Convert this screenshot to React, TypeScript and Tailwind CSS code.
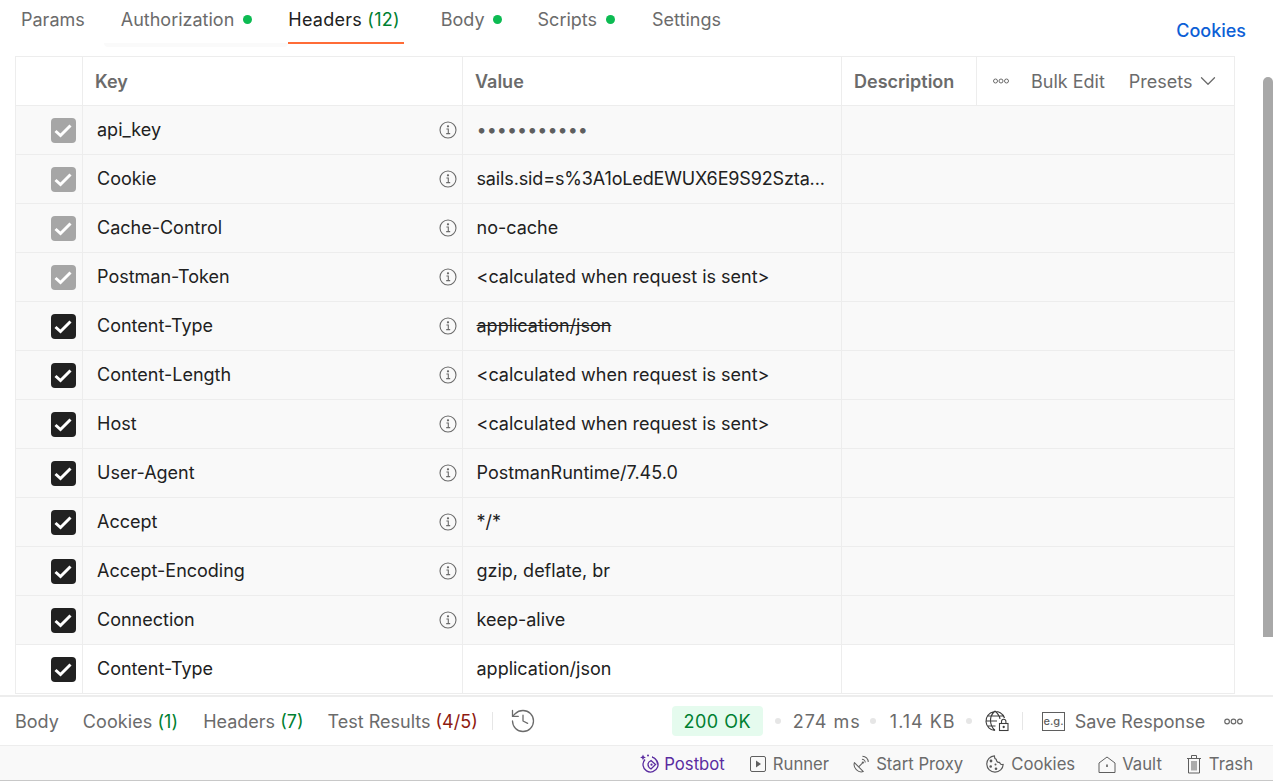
import { ChevronDown, History } from "lucide-react";

type Row = {
  name: string;
  value: string;
  auto?: boolean;
  info?: boolean;
  struck?: boolean;
  white?: boolean;
  valueClass?: string;
};

const rows: Row[] = [
  { name: "api_key", value: "•••••••••••", auto: true, info: true, valueClass: "text-[#5f5f5f]" },
  { name: "Cookie", value: "sails.sid=s%3A1oLedEWUX6E9S92Szta...", auto: true, info: true, valueClass: "tracking-[-0.14px]" },
  { name: "Cache-Control", value: "no-cache", auto: true, info: true },
  { name: "Postman-Token", value: "<calculated when request is sent>", auto: true, info: true },
  { name: "Content-Type", value: "application/json", info: true, struck: true },
  { name: "Content-Length", value: "<calculated when request is sent>", info: true },
  { name: "Host", value: "<calculated when request is sent>", info: true },
  { name: "User-Agent", value: "PostmanRuntime/7.45.0", info: true },
  { name: "Accept", value: "*/*", info: true },
  { name: "Accept-Encoding", value: "gzip, deflate, br", info: true },
  { name: "Connection", value: "keep-alive", info: true },
  { name: "Content-Type", value: "application/json", white: true },
];

const GreenDot = ({ className }: { className: string }) => (
  <span className={`block h-[9px] w-[9px] shrink-0 rounded-full bg-[#0cbb52] ${className}`} />
);
const Sep = ({ className }: { className: string }) => (
  <span className={`block h-[6px] w-[6px] shrink-0 rounded-full bg-[#e6e6e6] ${className}`} />
);

const Dots = ({ width = 16, height = 6 }: { width?: number; height?: number }) => (
  <svg width={width} height={height} viewBox="0 0 16 6" fill="none" stroke="#6b6b6b" strokeWidth="1">
    <circle cx="2.500" cy="3" r="2" />
    <circle cx="8" cy="3" r="2" />
    <circle cx="13.500" cy="3" r="2" />
  </svg>
);

const Info = () => (
  <svg width="18" height="18" viewBox="0 0 18 18" fill="none" stroke="#6b6b6b" strokeWidth="1.1">
    <circle cx="9" cy="9" r="8" />
    <path d="M7.400 8h1.900v4.400M7.200 12.600h4" />
    <circle cx="9" cy="5.300" r="0.600" fill="#6b6b6b" />
  </svg>
);

const Check = ({ auto }: { auto?: boolean }) => (
  <span
    className={`flex h-[25px] w-[25px] items-center justify-center rounded-[4px] ${
      auto ? "bg-[#a6a6a6]" : "bg-[#212121]"
    }`}
  >
    <svg width="18" height="15" viewBox="0 0 18 15" fill="none" stroke="#fff" strokeWidth="3">
      <path d="M1.500 8l5 4.500L16.500 2.500" />
    </svg>
  </span>
);

const GlobeLock = () => (
  <svg width="25" height="22" viewBox="0 0 25 22" fill="none" stroke="#3d3d3d" strokeWidth="1.100">
    <path d="M19.500 8A9.500 9.500 0 1 0 10 20.500M1 11h11M2 6h17M2.500 16h8M10 1c-6 5-6 14 0 19.500M10 1c3 2.500 4.500 5 5 8" />
    <rect x="14.500" y="13.500" width="8.500" height="7" fill="#fff" />
    <path d="M16.500 13.500v-2a2.200 2.200 0 0 1 4.400 0v2" />
    <circle cx="18.700" cy="17" r="0.600" />
  </svg>
);

const SaveIcon = () => (
  <svg width="23" height="19" viewBox="0 0 23 19" fill="none">
    <rect x="0.500" y="0.500" width="22" height="18" stroke="#5f5f5f" />
    <text x="11.500" y="13" textAnchor="middle" fontSize="11" fontWeight="500" fontFamily="Inter, sans-serif" fill="#5f5f5f">
      e.g.
    </text>
  </svg>
);

const PostbotIcon = () => (
  <svg width="19" height="20" viewBox="0 0 19 20" fill="none" stroke="#5a2ca0" strokeWidth="1.300">
    <path d="M5 5.500a7.500 7.500 0 1 0 7-2.300c2.800.5 5.500 3.300 5.500 7.300" />
    <path d="M11 6.500l4.500 4-4.500 4.500c-1.800-1-3-2.800-3-4.500s1.200-3.200 3-4z" />
    <circle cx="11.500" cy="10.700" r="1.100" fill="#5a2ca0" stroke="none" />
    <path d="M3 0.500l.9 2 2 .9-2 .9-.9 2-.9-2-2-.9 2-.9z" fill="#5a2ca0" stroke="none" />
    <circle cx="8" cy="1.500" r="1" fill="#5a2ca0" stroke="none" />
  </svg>
);

const RunnerIcon = () => (
  <svg width="16" height="16" viewBox="0 0 16 16" fill="none" stroke="#5f5f5f">
    <rect x="0.500" y="0.500" width="15" height="15" rx="1.500" />
    <path d="M6 4.500l5 3.500-5 3.500z" fill="#5f5f5f" stroke="none" />
  </svg>
);

const ProxyIcon = () => (
  <svg width="17" height="18" viewBox="0 0 17 18" fill="none" stroke="#5f5f5f" strokeWidth="1.100">
    <path d="M1.500 7.500c-1 3 0 5.500 2 7.500s5 3 7.500 2z" strokeLinejoin="round" />
    <path d="M6 12l4-4" />
    <circle cx="10.500" cy="7.500" r="1.200" fill="#5f5f5f" stroke="none" />
    <path d="M9.500 4c1.700 0 3.500 1.500 3.500 3.500M10 0.800c3.500 0 6.200 2.700 6.200 6.200" />
  </svg>
);

const CookieIcon = () => (
  <svg width="18" height="18" viewBox="0 0 18 18" fill="none" stroke="#5a5a5a" strokeWidth="1.200">
    <path d="M8.500 0.800a8.200 8.200 0 1 0 8.700 8.500c-1.800.6-3.200-.2-3.600-1.900-1.800.2-3.300-1-3.300-3-1.300-.3-2-1.800-1.800-3.600z" strokeLinejoin="round" />
    <circle cx="5" cy="6" r="1.400" fill="#5a5a5a" stroke="none" />
    <circle cx="4.700" cy="11.500" r="1.300" fill="#5a5a5a" stroke="none" />
    <circle cx="9.500" cy="9.500" r="1" fill="#5a5a5a" stroke="none" />
    <circle cx="10" cy="13.800" r="1.300" fill="#5a5a5a" stroke="none" />
  </svg>
);

const VaultIcon = () => (
  <svg width="18" height="17" viewBox="0 0 18 17" fill="none" stroke="#5f5f5f">
    <path d="M1 7L9 1l8 6v9.500H1z" strokeLinejoin="round" />
    <path d="M9 8.500v2.500" strokeWidth="1.600" />
  </svg>
);

const TrashIcon = () => (
  <svg width="16" height="20" viewBox="0 0 16 20" fill="none" stroke="#5f5f5f">
    <path d="M1 4.500h14M5.500 4V1.500h5V4M2.500 4.500v14.500h11V4.500M6 7v9.500M8 7v9.500M10 7v9.500" />
  </svg>
);

const footerItems = [
  { label: "Runner", icon: <RunnerIcon />, width: "w-[16px]", gap: "gap-[7px]", mr: "mr-[24px]" },
  { label: "Start Proxy", icon: <ProxyIcon />, width: "w-[16px]", gap: "gap-[7px]", mr: "mr-[23px]" },
  { label: "Cookies", icon: <CookieIcon />, width: "w-[18px]", gap: "gap-[7px]", mr: "mr-[23px]" },
  { label: "Vault", icon: <VaultIcon />, width: "w-[18px]", gap: "gap-[6px]", mr: "mr-[24px]" },
  { label: "Trash", icon: <TrashIcon />, width: "w-[16px]", gap: "gap-[7px]", mr: "" },
];

export default function App() {
  return (
    <div className="relative flex h-[781px] w-[1273px] flex-col overflow-hidden bg-white font-['Inter',sans-serif] text-[18px] text-[#212121]">
      {/* request tabs */}
      <div className="relative h-[56px] shrink-0 text-[#6b6b6b]">
        <div className="flex h-[38px] items-center pl-[21px]">
          <span className="mr-[36px]">Params</span>
          <span>Authorization</span>
          <GreenDot className="ml-[9px] mr-[36px]" />
          <span className="tracking-[0.25px] text-[#212121]">
            Headers <span className="text-[#007f31]">(12)</span>
          </span>
          <span className="ml-[41px]">Body</span>
          <GreenDot className="ml-[8px] mr-[36px]" />
          <span>Scripts</span>
          <GreenDot className="ml-[9px] mr-[37px]" />
          <span>Settings</span>
          <span className="ml-auto mr-[27px] mt-[23px] font-medium text-[#0d5fd6]">Cookies</span>
        </div>
        <div className="absolute left-[104px] top-[43px] h-[4px] w-[184px] rounded-b-[6px] bg-[#fafafa]" />
        <div className="absolute left-[288px] top-[42px] h-[2px] w-[116px] bg-[#ff6c37]" />
      </div>

      {/* headers table */}
      <div className="min-h-0 flex-1 overflow-hidden pl-[15px] pr-[38px]">
        <div className="border border-b-0 border-[#ededed]">
          <div className="flex h-[49px] border-b border-[#ededed] font-semibold text-[#6b6b6b]">
            <div className="w-[67px] shrink-0 border-r border-[#ededed]" />
            <div className="flex w-[380px] shrink-0 items-center border-r border-[#ededed] pl-[12px]">Key</div>
            <div className="flex w-[379px] shrink-0 items-center border-r border-[#ededed] pl-[12px]">Value</div>
            <div className="flex w-[135px] shrink-0 items-center border-r border-[#ededed] pl-[12px]">Description</div>
            <div className="flex flex-1 items-center pl-[16px] font-normal">
              <Dots />
              <span className="ml-[22px]">Bulk Edit</span>
              <span className="ml-[24px]">Presets</span>
              <ChevronDown size={26} strokeWidth={1.200} className="ml-[2px]" />
            </div>
          </div>
          {rows.map((row, index) => (
            <div
              key={index}
              className={`flex h-[49px] border-b border-[#ededed] ${row.white ? "bg-white" : "bg-[#f9f9f9]"}`}
            >
              <div className="flex w-[67px] shrink-0 items-center justify-end border-r border-[#ededed] pr-[6.500px]">
                <Check auto={row.auto} />
              </div>
              <div className="flex w-[380px] shrink-0 items-center justify-between border-r border-[#ededed] pl-[14px] pr-[5px]">
                <span className="pb-[2px]">{row.name}</span>
                {row.info && <Info />}
              </div>
              <div className="flex w-[379px] shrink-0 items-center border-r border-[#ededed] pl-[13.500px]">
                <span className={`pb-[2px] ${row.struck ? "line-through" : ""} ${row.valueClass ?? ""}`}>{row.value}</span>
              </div>
              <div className="flex-1" />
            </div>
          ))}
        </div>
      </div>

      {/* response bar */}
      <div className="flex h-[51px] shrink-0 items-center border-t-2 border-b border-[#ededed] bg-white pl-[15px] text-[#6b6b6b]">
        <span>Body</span>
        <span className="ml-[24px] tracking-[0.08px]">
          Cookies <span className="text-[#007f31]">(1)</span>
        </span>
        <span className="ml-[25px]">
          Headers <span className="text-[#007f31]">(7)</span>
        </span>
        <span className="ml-[24px]">
          Test Results <span className="text-[#8e1a10]">(4/5)</span>
        </span>
        <span className="ml-[14px] h-[18px] w-px bg-[#e6e6e6]" />
        <History size={28} strokeWidth={1.100} className="ml-[16px]" />
        <span className="ml-[135px] flex h-[30px] w-[91px] items-center justify-center rounded-[4px] bg-[#e5fbee] tracking-[0.5px] text-[#007f31]">
          200 OK
        </span>
        <Sep className="ml-[12px]" />
        <span className="ml-[12px] tracking-[1px]">274 ms</span>
        <Sep className="ml-[9px]" />
        <span className="ml-[14px] tracking-[1px]">1.14 KB</span>
        <Sep className="ml-[10px]" />
        <span className="ml-[13px]"><GlobeLock /></span>
        <span className="ml-[12px] h-[18px] w-px bg-[#e6e6e6]" />
        <span className="ml-[19px]"><SaveIcon /></span>
        <span className="ml-[10px]">Save Response</span>
        <span className="ml-[18px] flex"><Dots width={21} height={7} /></span>
      </div>

      {/* status bar */}
      <div className="flex h-[35px] shrink-0 items-center justify-end border-b border-[#c8c8c8] bg-[#f9f9f9] pr-[20px] pt-[3px] text-[16.700px] text-[#6b6b6b]">
        <span className="mr-[25px] flex items-center gap-[5px] text-[#5a2ca0]">
          <PostbotIcon />
          Postbot
        </span>
        {footerItems.map((item) => (
          <span key={item.label} className={`flex items-center ${item.gap} ${item.mr}`}>
            <span className={`flex ${item.width} shrink-0 justify-center`}>{item.icon}</span>
            {item.label}
          </span>
        ))}
      </div>

      {/* scrollbar thumb */}
      <div className="absolute left-[1263px] top-[77px] h-[560px] w-[10px] rounded-t-full bg-[#a8a8a8]" />
    </div>
  );
}
